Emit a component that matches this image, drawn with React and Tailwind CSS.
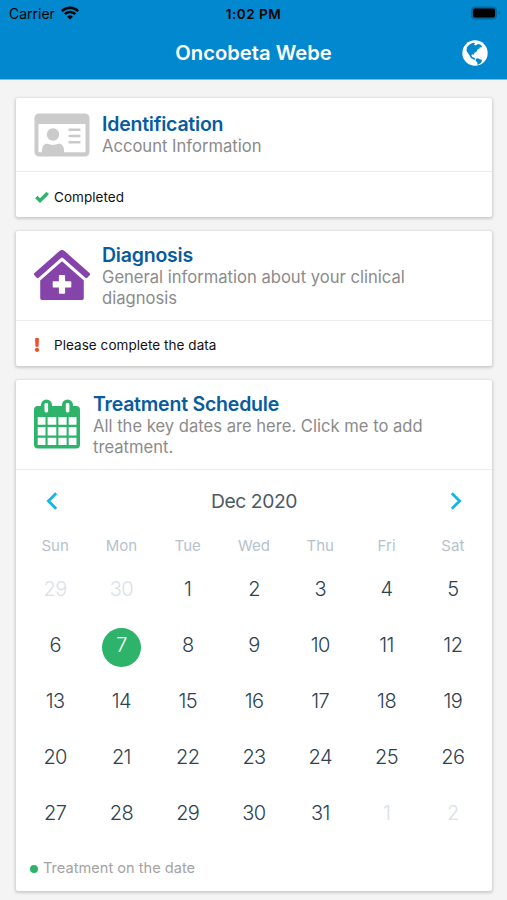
import { FaExclamation, FaClinicMedical } from "react-icons/fa"
import clsx from "clsx"

const weekdays = ["Sun", "Mon", "Tue", "Wed", "Thu", "Fri", "Sat"]

// Sunday 29 Nov up to Saturday 2 Jan
const days = [29, 30, ...Array.from({ length: 31 }, (_, i) => i + 1), 1, 2].map((day, i) => ({
  day,
  outside: i < 2 || i > 32,
  treatment: i === 8,
}))

function WifiIcon() {
  return (
    <svg viewBox="0 0 18 14" className="w-[18px] h-[14px] -mt-[2px]" fill="none" stroke="currentColor" strokeWidth="2.5">
      <path d="M0.900 5.100a11.600 11.600 0 0 1 16.200 0" />
      <path d="M3.700 8.200a7.600 7.600 0 0 1 10.600 0" />
      <path d="M9 13.600 6.100 10.700a4.100 4.100 0 0 1 5.800 0z" fill="currentColor" stroke="none" />
    </svg>
  )
}

function BatteryIcon() {
  return (
    <svg viewBox="0 0 30 14" className="w-[30px] h-[14px] -mt-[1px]">
      <rect x="0.500" y="1" width="25" height="12" rx="3.500" fill="#0369a1" stroke="#04649b" />
      <rect x="2" y="2.600" width="22" height="8.800" rx="2" fill="#000" />
      <path d="M27.500 5v4c1.600-.6 1.600-3.400 0-4z" fill="#04649b" />
    </svg>
  )
}

function GlobeIcon() {
  return (
    <svg viewBox="0 0 26 26" className="w-[26px] h-[26px] mt-[1px] justify-self-end">
      <circle cx="13" cy="13" r="12.700" fill="#fff" />
      <path
        fill="#0288ce"
        d="M4.800 7.400C6.200 5.200 8.600 3.400 11.400 2.700l1.600.6-1 1.200 1.600.9 2.400-1.300 2.200.3 1.700 1.700-.3 1.500-1.800-.3-.6 1.500-1.700.7-.9 1.900-2.300 1.700-.5 1.700-1.800-.5-.6 1.500 1.200 1.500 1.800.5 1 1.600-1.200.3-3.200-1.700-1.700-3-1.500-2.300-1.200-1.500z"
      />
      <path fill="#0288ce" d="m13.800 18.700 2-.5 2 1.100 2.400.8-.9 2.300-2 1.700-1.700 1-.3-2.600-1.600-1.800z" />
    </svg>
  )
}

function CheckIcon() {
  return (
    <svg viewBox="0 0 14 12" className="w-[14px] h-[12px] mr-[5px] -mt-[1px]" fill="none" stroke="#2db36a" strokeWidth="3.300">
      <path d="m1.300 6 3.700 3.700L12.700 2" />
    </svg>
  )
}

function IdCardIcon() {
  return (
    <svg viewBox="0 0 56 44" className="w-[56px] h-[44px]" fill="#cbcbcb">
      <path
        fillRule="evenodd"
        d="M5 .5h46a4.500 4.500 0 0 1 4.500 4.500v34a4.500 4.500 0 0 1-4.500 4.500H5A4.500 4.500 0 0 1 .5 39V5A4.500 4.500 0 0 1 5 .5zM4.500 11v27c0 .8.4 1.200 1 1.200h45c.6 0 1-.4 1-1.200V11z"
      />
      <circle cx="19" cy="21.500" r="6.200" />
      <path d="M8 40v-2.500c0-4.200 2-6.700 5.500-6.700 3.500 1.500 7.500 1.500 11 0 3.500 0 5.500 2.500 5.500 6.700V40z" />
      <path d="M34.500 15.500h12v2.600h-12zM34.500 21.700h12v2.600h-12zM34.500 28h12v2.600h-12z" />
    </svg>
  )
}

function CalendarIcon() {
  return (
    <svg viewBox="0 0 46 50" className="w-[46px] h-[50px] mt-[6px]">
      <rect y="7" width="46" height="42.500" rx="4" fill="#2db36a" />
      <rect x="7" y="0.500" width="11" height="16" rx="5.500" fill="#2db36a" />
      <rect x="28" y="0.500" width="11" height="16" rx="5.500" fill="#2db36a" />
      <rect x="10.500" y="4" width="3.600" height="9.500" rx="1.400" fill="#fff" />
      <rect x="31.800" y="4" width="3.600" height="9.500" rx="1.400" fill="#fff" />
      <path
        fill="#fff"
        d="M3.700 18h7.800v7.800H3.700zM13.600 18h8.700v7.800h-8.700zM24.400 18h8.200v7.800h-8.200zM34.700 18h7.800v7.800h-7.800zM3.700 28h7.800v8.600H3.700zM13.600 28h8.700v8.600h-8.700zM24.400 28h8.200v8.600h-8.200zM34.700 28h7.800v8.600h-7.800zM3.700 38.700h7.800v7.300H3.700zM13.600 38.700h8.700v7.300h-8.700zM24.400 38.700h8.200v7.300h-8.200zM34.700 38.700h7.800v7.300h-7.800z"
      />
    </svg>
  )
}

function Chevron({ flip }) {
  return (
    <svg
      viewBox="0 0 12 18"
      className={clsx("w-[12px] h-[18px]", flip && "rotate-180")}
      fill="none"
      stroke="#15b5ec"
      strokeWidth="2.800"
    >
      <path d="M10.200 1.200 2.400 9l7.800 7.800" />
    </svg>
  )
}

function Card({ icon, title, text, headClass, gapClass, children }) {
  return (
    <section className="bg-white rounded-[2px] shadow-[0_1px_3px_1px_rgba(0,0,0,0.17)]">
      <div className={clsx("flex items-start pl-[18px] border-b border-[#ececec]", headClass)}>
        {icon}
        <div className={gapClass}>
          <h2 className="text-[19.500px] leading-[22px] tracking-[-0.220px] font-semibold text-[#075c9f]">{title}</h2>
          <p className="mt-[1px] text-[16.600px] leading-[21px] text-[#8b8b8b]">{text}</p>
        </div>
      </div>
      {children}
    </section>
  )
}

export default function App() {
  return (
    <div className="h-[900px] overflow-hidden bg-[#f4f4f4] font-['Inter',sans-serif]">
      <header className="h-[79px] bg-[#0288ce] border-b border-[#6fc3ea] box-content">
        <div className="grid grid-cols-[1fr_auto_1fr] items-center h-[27px] px-[6px] text-black">
          <div className="flex items-center gap-[6px] pl-[3px] text-[14px]">
            Carrier
            <WifiIcon />
          </div>
          <div className="pt-[1px] text-[13.500px] tracking-[0.550px] font-semibold">1:02 PM</div>
          <div className="flex justify-end">
            <BatteryIcon />
          </div>
        </div>
        <div className="grid grid-cols-[1fr_auto_1fr] items-center h-[51px] pr-[19px] pl-[19px] text-white">
          <h1 className="col-start-2 pt-[1px] text-[20.200px] font-semibold">Oncobeta Webe</h1>
          <GlobeIcon />
        </div>
      </header>

      <main className="flex flex-col gap-[14px] pt-[18px] pl-[16px] pr-[15px]">
        <Card
          icon={<IdCardIcon />}
          title="Identification"
          text="Account Information"
          headClass="h-[74px] pt-[15px]"
          gapClass="ml-[12px]"
        >
          <div className="flex items-center h-[45px] pl-[19px] pt-[6px] text-[13.500px] tracking-[0.050px] text-[#111]">
            <CheckIcon />
            Completed
          </div>
        </Card>

        <Card
          icon={<FaClinicMedical className="w-[56px] h-[50px] mt-[6px] text-[#8644ab]" />}
          title="Diagnosis"
          text={
            <>
              General information about your clinical
              <br />
              diagnosis
            </>
          }
          headClass="h-[90px] pt-[13px]"
          gapClass="ml-[12px]"
        >
          <div className="flex items-center h-[45px] pl-[14px] pt-[4px] text-[13.500px] tracking-[0.050px] text-[#111]">
            <FaExclamation className="size-[14px] mr-[10px] mb-[1px] text-[#ef4f2c]" />
            Please complete the data
          </div>
        </Card>

        <Card
          icon={<CalendarIcon />}
          title="Treatment Schedule"
          text={
            <>
              All the key dates are here. Click me to add
              <br />
              treatment.
            </>
          }
          headClass="h-[90px] pt-[13px]"
          gapClass="ml-[13px]"
        >
          <div className="h-[421px] px-[6px]">
            <div className="flex items-center justify-between h-[62px] px-[24px]">
              <Chevron />
              <span className="text-[19.300px] tracking-[-0.400px] text-[#4d5a64]">Dec 2020</span>
              <Chevron flip />
            </div>
            <div className="grid grid-cols-7 h-[29px] text-center text-[15px] leading-[28px] text-[#b6c1cd]">
              {weekdays.map((name) => (
                <div key={name}>{name}</div>
              ))}
            </div>
            <div className="grid grid-cols-7 auto-rows-[56px] text-[20px] tracking-[-0.600px] font-light text-[#2d4150]">
              {days.map(({ day, outside, treatment }, i) => (
                <div key={i} className={clsx("flex items-center justify-center", outside && "text-[#d9e1e8]")}>
                  {treatment ? (
                    <span className="size-[39px] mt-[5px] rounded-full bg-[#2db36a] text-center leading-[35px] text-white">
                      {day}
                    </span>
                  ) : (
                    day
                  )}
                </div>
              ))}
            </div>
            <div className="flex items-center gap-[5px] h-[54px] pt-[1px] pl-[8px] text-[14.600px] text-[#a3a3a3]">
              <span className="size-[8px] rounded-full bg-[#2db36a]" />
              Treatment on the date
            </div>
          </div>
        </Card>
      </main>
    </div>
  )
}
